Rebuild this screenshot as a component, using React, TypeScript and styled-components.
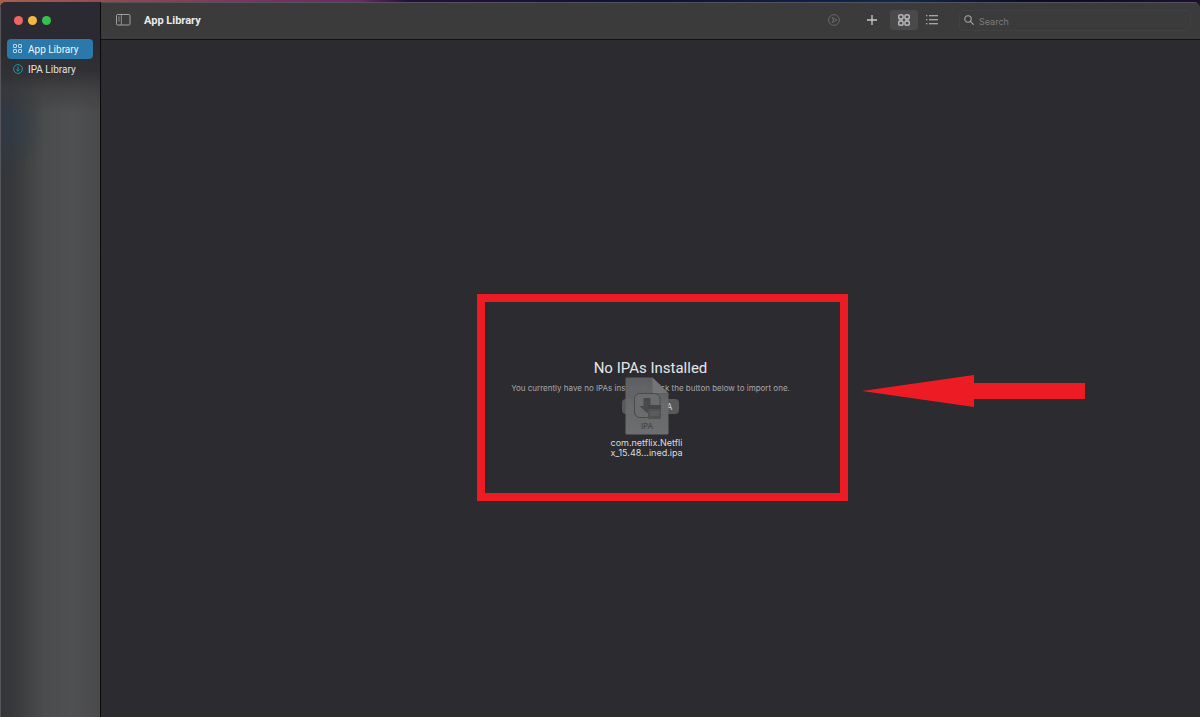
import React from 'react';
import styled, { createGlobalStyle } from 'styled-components';

const GlobalStyle = createGlobalStyle`
  *, *::before, *::after { box-sizing: border-box; }
  body {
    margin: 0;
    background: #0a0b22;
    color: #e6e6e8;
    font-family: Inter, "Liberation Sans", sans-serif;
    overflow: hidden;
  }
  button, input { font: inherit; color: inherit; }
  button { border: 0; padding: 0; background: none; }
`;

const Desktop = styled.div`
  min-height: 100vh;
  display: flex;
  padding-top: 2px;
  background: linear-gradient(90deg, #a8604a 0%, #8c4a50 10%, #7c3560 20%, #6a2a66 30%, #241038 34%, #0d1236 55%, #10284c 75%, #0a0b22 86%, #1c1030 100%);
`;

const Window = styled.div`
  flex: 1;
  display: flex;
  border-radius: 6px 6px 0 0;
  overflow: hidden;
  background: #2c2b30;
`;

const Sidebar = styled.aside`
  width: 101px;
  flex-shrink: 0;
  padding: 14px 7px 0;
  border-right: 1px solid #0a0a0b;
  box-shadow: inset 1px 0 #55555a;
  background:
    linear-gradient(180deg, #2b2933 0, #2b2a32 40px, #303034 68px, rgba(58, 58, 62, 0.6) 88px, rgba(76, 76, 78, 0) 112px),
    radial-gradient(ellipse 44px 50px at 4px 124px, rgba(44, 60, 78, 0.6), rgba(44, 60, 78, 0)),
    linear-gradient(90deg, #343538 0, #36383b 12px, #414242 28px, #4b4c4d 44px, #4f5051 72px, #4a4a4b 100%);
`;

const TrafficLights = styled.div`
  display: flex;
  gap: 5px;
  height: 9px;
  margin: 0 0 14px 7px;
`;

const Light = styled.button<{ $color: string }>`
  width: 9px;
  height: 9px;
  border-radius: 50%;
  background: ${p => p.$color};
`;

const NavLink = styled.a<{ $active?: boolean }>`
  display: flex;
  align-items: center;
  gap: 5px;
  height: 20px;
  padding-left: 6px;
  border-radius: 4px;
  font-family: Roboto, sans-serif;
  font-size: 10px;
  line-height: 20px;
  white-space: nowrap;
  text-decoration: none;
  color: ${p => (p.$active ? '#f1f7fb' : '#e2e2e4')};
  background: ${p => (p.$active ? '#2b78aa' : 'transparent')};
`;

const NavLabel = styled.span`
  padding-top: 2px;
`;

const Main = styled.main`
  flex: 1;
  min-width: 0;
  display: flex;
  flex-direction: column;
`;

const Toolbar = styled.header`
  display: flex;
  align-items: center;
  height: 38px;
  padding: 0 9px 2px 12px;
  background: #3b3b3c;
  border-top: 1px solid #535359;
  border-bottom: 1px solid #141416;
`;

const Title = styled.h1`
  flex: 1;
  margin: 0 0 0 11px;
  padding-top: 2px;
  font-family: Roboto, sans-serif;
  font-size: 11px;
  line-height: 16px;
  font-weight: 700;
  color: #e9e9ea;
`;

const ToolButton = styled.button<{ $selected?: boolean; $dim?: boolean }>`
  display: flex;
  align-items: center;
  justify-content: center;
  width: ${p => (p.$selected ? 28 : 20)}px;
  height: 20px;
  border-radius: 4px;
  color: ${p => (p.$dim ? '#67676a' : '#c9c9cb')};
  background: ${p => (p.$selected ? '#4a4a4c' : 'transparent')};
`;

const Tools = styled.div`
  display: flex;
  align-items: center;
`;

const AddSlot = styled.div`
  margin: 0 8px 0 18px;
`;

const ViewSwitch = styled.div`
  display: flex;
  gap: 4px;
  margin-right: 17px;
`;

const SearchField = styled.label`
  display: flex;
  align-items: center;
  gap: 5px;
  width: 232px;
  height: 21px;
  padding: 0 4px;
  border: 1px solid #414143;
  border-radius: 4px;
  color: #a6a6a8;
`;

const SearchInput = styled.input`
  flex: 1;
  min-width: 0;
  height: 19px;
  padding: 2px 0 0;
  border: 0;
  outline: 0;
  background: none;
  font-size: 9px;
  &::placeholder { color: #7d7d80; opacity: 1; }
`;

const Stage = styled.section`
  flex: 1;
  display: flex;
  align-items: center;
  justify-content: center;
  padding-top: 14px;
`;

const EmptyState = styled.div`
  position: relative;
  display: flex;
  flex-direction: column;
  align-items: center;
  white-space: nowrap;
`;

const EmptyTitle = styled.h2`
  margin: 0;
  font-family: Roboto, sans-serif;
  font-size: 15px;
  line-height: 20px;
  font-weight: 400;
  color: #e6e6e8;
`;

const EmptyText = styled.p`
  margin: 4px 0 5px;
  font-size: 8px;
  line-height: 12px;
  color: #a9a9ac;
`;

const ImportButton = styled.button`
  width: 57px;
  height: 15px;
  border-radius: 4px;
  background: #59595c;
  color: #d6d6d8;
  font-size: 9px;
  line-height: 15px;
`;

const DraggedFile = styled.figure`
  position: absolute;
  top: 19px;
  left: 50%;
  width: 76px;
  margin: 0 0 0 -42px;
  display: flex;
  flex-direction: column;
  align-items: center;
`;

const FileName = styled.figcaption`
  margin-top: 3px;
  text-align: center;
  font-size: 9px;
  line-height: 10px;
  color: #dcdcde;
`;

const Highlight = styled.div`
  position: absolute;
  top: -64px;
  left: 50%;
  width: 371px;
  height: 207px;
  margin-left: -174px;
  border: 8px solid #ed1c24;
  pointer-events: none;
`;

const Pointer = styled.svg`
  position: absolute;
  top: 73px;
  left: 100%;
  margin-left: 22px;
`;

const SmallGridIcon = () => (
  <svg width="10" height="10" viewBox="0 0 10 10" fill="none" stroke="#b9d8ea" strokeWidth="1" aria-hidden="true">
    <rect x="0.5" y="0.5" width="3" height="3" rx="0.4" />
    <rect x="5.5" y="0.5" width="3" height="3" rx="0.4" />
    <rect x="0.5" y="5.5" width="3" height="3" rx="0.4" />
    <rect x="5.5" y="5.5" width="3" height="3" rx="0.4" />
  </svg>
);

const GridIcon = () => (
  <svg width="12" height="12" viewBox="0 0 12 12" fill="none" stroke="currentColor" strokeWidth="1.3" aria-hidden="true">
    <rect x="0.8" y="0.8" width="4.2" height="4.2" rx="1" />
    <rect x="7" y="0.8" width="4.2" height="4.2" rx="1" />
    <rect x="0.8" y="7" width="4.2" height="4.2" rx="1" />
    <rect x="7" y="7" width="4.2" height="4.2" rx="1" />
  </svg>
);

const DownloadIcon = () => (
  <svg width="10" height="10" viewBox="0 0 10 10" fill="none" stroke="#22a0b4" strokeWidth="0.9" aria-hidden="true">
    <circle cx="5" cy="5" r="4.4" />
    <path d="M5 2.5v4.6M3.4 5.6 5 7.2l1.6-1.6" />
  </svg>
);

const SidebarIcon = () => (
  <svg width="15" height="12" viewBox="0 0 15 12" fill="none" stroke="#a2a2a4" strokeWidth="1" aria-hidden="true">
    <rect x="0.5" y="0.5" width="13.5" height="10.5" rx="1.2" />
    <path d="M5.3 1v10M2 3.2h1.8M2 5h1.8M2 6.8h1.8" strokeOpacity="0.8" />
  </svg>
);

const PlayIcon = () => (
  <svg width="12" height="12" viewBox="0 0 12 12" fill="none" stroke="currentColor" strokeWidth="1" aria-hidden="true">
    <circle cx="6" cy="6" r="5.4" />
    <path d="M4 3.4 9 6 4 8.6 5.6 6Z" strokeLinejoin="round" />
  </svg>
);

const PlusIcon = () => (
  <svg width="12" height="12" viewBox="0 0 12 12" stroke="currentColor" strokeWidth="1.3" aria-hidden="true">
    <path d="M6 1v10M1 6h10" />
  </svg>
);

const ListIcon = () => (
  <svg width="12" height="12" viewBox="0 0 12 12" stroke="currentColor" strokeWidth="1.1" aria-hidden="true">
    <path d="M3 1.8h9M3 5.8h9M3 9.8h9M0 1.8h1.4M0 5.8h1.4M0 9.8h1.4" />
  </svg>
);

const SearchIcon = () => (
  <svg width="10" height="10" viewBox="0 0 10 10" fill="none" stroke="currentColor" strokeWidth="1.1" strokeLinecap="round" aria-hidden="true">
    <circle cx="4" cy="4" r="3.2" />
    <path d="M6.4 6.4 9.3 9.3" />
  </svg>
);

const IpaFileIcon = () => (
  <svg width="44" height="58" viewBox="0 0 44 58" aria-hidden="true">
    <defs>
      <linearGradient id="sheet" x1="0" y1="0" x2="0" y2="1">
        <stop offset="0" stopColor="#606163" />
        <stop offset="1" stopColor="#707172" />
      </linearGradient>
    </defs>
    <path d="M1.5 0.5H27.5L43.5 16.5V56Q43.5 57.5 42 57.5H2Q0.5 57.5 0.5 56V1.5Q0.5 0.5 1.5 0.5Z" fill="url(#sheet)" fillOpacity="0.96" />
    <path d="M27.5 0.5 43.5 16.5H30Q27.5 16.5 27.5 14Z" fill="#747576" />
    <path d="M28 16.5H43.5" stroke="#58595b" strokeWidth="0.8" />
    <rect x="9.5" y="16.5" width="25.5" height="24" rx="5.5" fill="#6a6c6d" stroke="#484a4c" strokeWidth="1" />
    <path d="M18.5 21h7v8h4L22 36l-7.5-7h4Z" fill="#484a4b" />
    <rect x="23" y="28" width="13" height="14" fill="#515254" />
    <path d="M23 28h13v4H23Z" fill="#45464a" />
    <path d="M25 34h9v5h-9Z" fill="#5a5b5d" />
    <text x="22" y="52" textAnchor="middle" fontFamily="Inter, sans-serif" fontSize="8" fill="#3f4042">IPA</text>
  </svg>
);

export default function App() {
  return (
    <>
      <GlobalStyle />
      <Desktop>
        <Window>
          <Sidebar>
            <TrafficLights>
              <Light $color="#ef6560" aria-label="Close" />
              <Light $color="#f2b844" aria-label="Minimize" />
              <Light $color="#35c24c" aria-label="Zoom" />
            </TrafficLights>
            <nav>
              <NavLink href="#apps" $active>
                <SmallGridIcon />
                <NavLabel>App Library</NavLabel>
              </NavLink>
              <NavLink href="#ipas">
                <DownloadIcon />
                <NavLabel>IPA Library</NavLabel>
              </NavLink>
            </nav>
          </Sidebar>
          <Main>
            <Toolbar>
              <ToolButton aria-label="Toggle sidebar"><SidebarIcon /></ToolButton>
              <Title>App Library</Title>
              <Tools>
                <ToolButton $dim aria-label="Launch"><PlayIcon /></ToolButton>
                <AddSlot>
                  <ToolButton aria-label="Add"><PlusIcon /></ToolButton>
                </AddSlot>
                <ViewSwitch>
                  <ToolButton $selected aria-label="Grid view"><GridIcon /></ToolButton>
                  <ToolButton aria-label="List view"><ListIcon /></ToolButton>
                </ViewSwitch>
                <SearchField>
                  <SearchIcon />
                  <SearchInput type="text" placeholder="Search" aria-label="Search" />
                </SearchField>
              </Tools>
            </Toolbar>
            <Stage>
              <EmptyState>
                <EmptyTitle>No IPAs Installed</EmptyTitle>
                <EmptyText>You currently have no IPAs installed. Click the button below to import one.</EmptyText>
                <ImportButton>Import IPA</ImportButton>
                <DraggedFile>
                  <IpaFileIcon />
                  <FileName>com.netflix.Netfli<br />x_15.48...ined.ipa</FileName>
                </DraggedFile>
                <Highlight>
                  <Pointer width="223" height="32" viewBox="0 0 223 32" aria-hidden="true">
                    <path d="M0 16 112 0V8H223V24H112V32Z" fill="#ed1c24" />
                  </Pointer>
                </Highlight>
              </EmptyState>
            </Stage>
          </Main>
        </Window>
      </Desktop>
    </>
  );
}
